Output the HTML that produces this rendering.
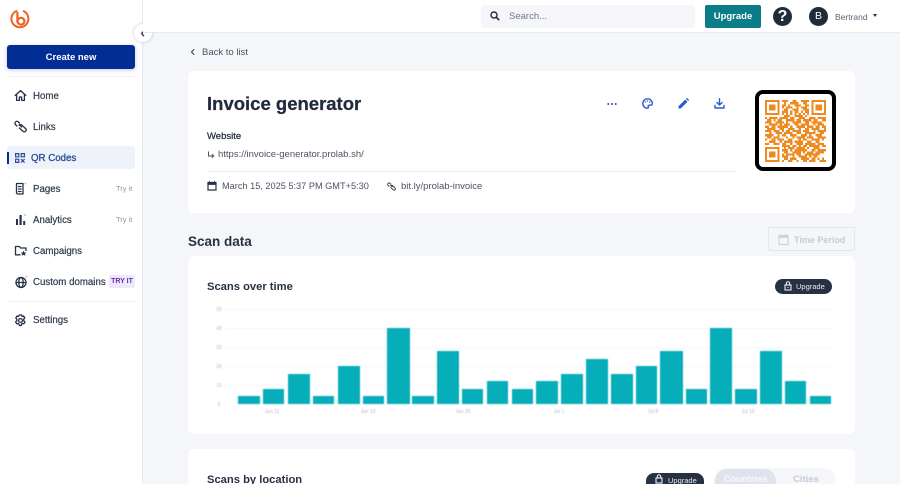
<!DOCTYPE html>
<html lang="en">
<head>
<meta charset="utf-8">
<title>Invoice generator</title>
<style>
html,body{margin:0;padding:0;width:900px;height:484px;overflow:hidden}
body{position:relative;background:#f4f6fa;font-family:"Liberation Sans",sans-serif;color:#273144}
.a{position:absolute;white-space:nowrap}
.card{position:absolute;left:188px;width:667px;background:#fff;border-radius:6px}
svg{position:absolute;overflow:visible}
.ic{fill:none;stroke:#273144;stroke-width:1.3;stroke-linecap:round;stroke-linejoin:round}
.blue{fill:none;stroke:#2a5bd0;stroke-width:1.4;stroke-linecap:round;stroke-linejoin:round}
.nav{font-size:9.700px;font-weight:400;color:#2f3a4d;line-height:16px;-webkit-text-stroke:.2px #2f3a4d}
.try{font-size:7.500px;color:#8f98a6;line-height:12px}
.pill{position:absolute;background:#273144;border-radius:8px;color:#e8ebf0;font-size:7.500px;line-height:15px}
</style>
</head>
<body>

<!-- Sidebar -->
<div class="a" style="left:0;top:0;width:142px;height:484px;background:#fff;border-right:1px solid #e4e9f2"></div>
<svg style="left:10px;top:9px" width="20" height="20" viewBox="0 0 20 20"><path d="M6.400 2A8.500 8.500 0 1 0 13.800 2.200" fill="none" stroke="#ee6123" stroke-width="2" stroke-linecap="round"/><path d="M7.400 3.800V12.800" fill="none" stroke="#ee6123" stroke-width="2.200" stroke-linecap="round"/><circle cx="11" cy="12.200" r="3.400" fill="none" stroke="#ee6123" stroke-width="2.200"/></svg>

<div class="a" style="left:134px;top:24px;width:18px;height:18px;border-radius:50%;background:#fff;box-shadow:0 0 3px rgba(60,80,120,.35)"></div>
<svg style="left:140px;top:30px" width="6" height="7" viewBox="0 0 6 7"><path d="M4 .8 1.600 3.500 4 6.200" fill="none" stroke="#273144" stroke-width="1.300"/></svg>

<div class="a" style="left:7px;top:45px;width:128px;height:24px;background:#022d94;border-radius:3px;box-shadow:0 1px 4px rgba(2,45,148,.25);color:#fff;font-size:9.500px;font-weight:700;line-height:25px;text-align:center">Create new</div>
<div class="a" style="left:7px;top:76px;width:128px;height:1px;background:#edf0f6"></div>

<svg style="left:14px;top:89px" width="13" height="13" viewBox="0 0 13 13"><path class="ic" d="M1.200 6.400 6.500 1.600l5.300 4.800M2.600 5.400v6h2.800V8h2.200v3.400h2.800v-6"/></svg>
<div class="a nav" style="left:33px;top:89px">Home</div>

<svg style="left:14px;top:120px" width="13" height="13" viewBox="0 0 13 13"><path class="ic" d="M5.500 3 4 1.600a2 2 0 0 0-2.700 2.800L3 6.200M7.600 7 5.200 4.600M5.400 8l4 3.600a1.900 1.900 0 0 0 2.500-2.700L8 5.200a2 2 0 0 0-2.600.2"/></svg>
<div class="a nav" style="left:33px;top:120px">Links</div>

<div class="a" style="left:7px;top:146px;width:128px;height:23px;background:#eef3fb;border-radius:3px"></div>
<div class="a" style="left:7px;top:152px;width:2px;height:12px;background:#022d94"></div>
<svg style="left:15px;top:153px" width="10" height="10" viewBox="0 0 10 10"><path fill="none" stroke="#2c4a94" stroke-width="1.200" d="M.6.6h3.200v3.200H.6zM6.200.6h3.200v3.200H6.200zM.6 6.200h3.200v3.200H.6z"/><path fill="none" stroke="#2c4a94" stroke-width="1.200" d="M6 6l3.600 3.600M9.600 6 6 9.600"/></svg>
<div class="a nav" style="left:31px;top:151px;color:#2c4a94;-webkit-text-stroke:.3px #2c4a94">QR Codes</div>

<svg style="left:15px;top:182px" width="13" height="13" viewBox="0 0 13 13"><path class="ic" d="M1.500 1.500h6.500v10.500H3a1.500 1.500 0 0 1-1.500-1.500z"/><path class="ic" d="M3.500 4.500h2.500M3.500 7h2.500M3.500 9.500h2.500"/><circle cx="10.500" cy="1.500" r="1" fill="#c0c6d0"/></svg>
<div class="a nav" style="left:33px;top:182px">Pages</div>
<div class="a try" style="left:116px;top:183px">Try it</div>

<svg style="left:15px;top:213px" width="13" height="13" viewBox="0 0 13 13"><path fill="#273144" d="M1 6h2v6H1zM4.500 2h2.200v10H4.500zM8.200 8h2v4h-2z"/><circle cx="10" cy="2" r="1" fill="#c0c6d0"/></svg>
<div class="a nav" style="left:33px;top:213px">Analytics</div>
<div class="a try" style="left:116px;top:214px">Try it</div>

<svg style="left:14px;top:244px" width="14" height="13" viewBox="0 0 14 13"><path class="ic" d="M6 10.800H1.500V2.500h4l1 1.500h5.500v2.500"/><path fill="#273144" d="M9.500 6.800l1 1.700 1.800.2-1.300 1.200.4 1.800-1.900-1-1.800 1 .4-1.800-1.300-1.200 1.800-.2z"/></svg>
<div class="a nav" style="left:33px;top:244px">Campaigns</div>

<svg style="left:15px;top:275px" width="14" height="14" viewBox="0 0 14 14"><circle class="ic" cx="6" cy="7.500" r="5"/><ellipse class="ic" cx="6" cy="7.500" rx="2.200" ry="5"/><path class="ic" d="M1 7.500h10"/><circle cx="11.500" cy="1.500" r="1" fill="#c0c6d0"/></svg>
<div class="a nav" style="left:33px;top:275px">Custom domains</div>
<div class="a" style="left:109px;top:275px;width:26px;height:13px;border-radius:2px;background:linear-gradient(90deg,#f1e4fb,#e6eefb);color:#6d2bb0;font-size:7px;font-weight:700;line-height:13px;text-align:center">TRY IT</div>

<div class="a" style="left:7px;top:301px;width:128px;height:1px;background:#edf0f6"></div>

<svg style="left:14px;top:314px" width="13" height="13" viewBox="0 0 13 13"><circle class="ic" cx="6.500" cy="6.500" r="1.900"/><path class="ic" d="M5.300 1h2.400l.4 1.500 1.500-.5 1.200 2-1.100 1.100.1 1.800 1.200 1-1.200 2-1.500-.5-.6.5-.4 1.600H5.300l-.4-1.600-.6-.5-1.500.5-1.200-2 1.200-1 .1-1.800L1.800 4l1.200-2 1.500.5z"/></svg>
<div class="a nav" style="left:33px;top:313px">Settings</div>

<!-- Top bar -->
<div class="a" style="left:143px;top:0;width:757px;height:32px;background:#fff;border-bottom:1px solid #e6ebf3"></div>
<div class="a" style="left:481px;top:5px;width:214px;height:23px;background:#f4f6fa;border-radius:3px"></div>
<svg style="left:490px;top:11px" width="10" height="10" viewBox="0 0 10 10"><circle cx="4" cy="4" r="3" fill="none" stroke="#222b3a" stroke-width="1.400"/><path d="M6.300 6.300 9.200 9.200" stroke="#222b3a" stroke-width="1.600"/></svg>
<div class="a" style="left:509px;top:9px;font-size:9.500px;line-height:15px;color:#6f7785">Search...</div>
<div class="a" style="left:705px;top:5px;width:56px;height:23px;background:#0a7d88;border-radius:2px;color:#fff;font-size:9.500px;font-weight:700;line-height:24px;text-align:center">Upgrade</div>
<div class="a" style="left:773px;top:7px;width:19px;height:19px;border-radius:50%;background:#222b3a;color:#fff;font-size:16px;font-weight:700;line-height:20px;text-align:center">?</div>
<div class="a" style="left:809px;top:7px;width:19px;height:19px;border-radius:50%;background:#222b3a;color:#fff;font-size:10.500px;line-height:19px;text-align:center">B</div>
<div class="a" style="left:835px;top:10px;font-size:8.500px;line-height:14px;color:#5d6573">Bertrand</div>
<div class="a" style="left:873px;top:14px;width:0;height:0;border-left:2.500px solid transparent;border-right:2.500px solid transparent;border-top:3px solid #273144"></div>

<!-- Back link -->
<svg style="left:190px;top:48px" width="6" height="8" viewBox="0 0 6 8"><path d="M4.200 1.200 1.500 4l2.700 2.800" fill="none" stroke="#3a4455" stroke-width="1.100"/></svg>
<div class="a" style="left:202px;top:45px;font-size:9.500px;line-height:15px;color:#4a5363">Back to list</div>

<!-- Card 1 -->
<div class="card" style="top:71px;height:142px"></div>
<div class="a" style="left:207px;top:91px;font-size:18.500px;font-weight:700;line-height:26px;color:#202b3c;-webkit-text-stroke:.25px #202b3c">Invoice generator</div>

<svg style="left:607px;top:102px" width="10" height="4" viewBox="0 0 10 4"><circle cx="1.300" cy="2" r="1" fill="#2c4a94"/><circle cx="5" cy="2" r="1" fill="#2c4a94"/><circle cx="8.700" cy="2" r="1" fill="#2c4a94"/></svg>
<svg style="left:642px;top:98px" width="11" height="11" viewBox="0 0 11 11"><path class="blue" d="M5.500.8a4.700 4.700 0 1 0 0 9.400c1 0 1.200-.8.800-1.400-.5-.8 0-1.600 1-1.600h1.400c1 0 1.600-.6 1.600-1.700C10.300 2.700 8.200.8 5.500.8z"/><circle cx="3.300" cy="4" r=".7" fill="#2a5bd0"/><circle cx="5.500" cy="3" r=".7" fill="#2a5bd0"/><circle cx="7.800" cy="4" r=".7" fill="#2a5bd0"/></svg>
<svg style="left:678px;top:98px" width="11" height="11" viewBox="0 0 11 11"><path fill="#2a5bd0" d="M.5 8.300 7.300 1.500l2.200 2.200-6.800 6.800H.5zM8 .8l.7-.5c.3-.2.6-.2.800 0l1.200 1.200c.2.200.2.500 0 .8l-.5.700z"/></svg>
<svg style="left:714px;top:98px" width="11" height="11" viewBox="0 0 11 11"><path class="blue" d="M5.500.8v6M3 4.500l2.500 2.500L8 4.500"/><path class="blue" d="M1 7.500v2.500h9V7.500"/></svg>

<div class="a" style="left:207px;top:129px;font-size:9.500px;line-height:15px;color:#273144;-webkit-text-stroke:.25px #273144">Website</div>
<svg style="left:207px;top:151px" width="8" height="8" viewBox="0 0 8 8"><path d="M1.500.5v4.500h5M4.800 3.200 6.700 5 4.800 6.800" fill="none" stroke="#4a5363" stroke-width="1"/></svg>
<div class="a" style="left:218px;top:147px;font-size:9.500px;line-height:15px;color:#4a5363">https://invoice-generator.prolab.sh/</div>
<div class="a" style="left:207px;top:171px;width:529px;height:1px;background:#e9ecf1"></div>

<svg style="left:207px;top:180px" width="10" height="11" viewBox="0 0 10 11"><path d="M1 2.500h8v7.500H1z" fill="none" stroke="#273144" stroke-width="1.200"/><path d="M1 2.500h8v2H1zM2.500.8v1.700M7.500.8v1.700" fill="#273144" stroke="#273144" stroke-width=".8"/></svg>
<div class="a" style="left:222px;top:179px;font-size:9.200px;line-height:15px;color:#4a5363">March 15, 2025 5:37 PM GMT+5:30</div>
<svg style="left:387px;top:182px" width="9" height="9" viewBox="0 0 13 13"><path class="ic" d="M5.500 3 4 1.600a2 2 0 0 0-2.700 2.800L3 6.200M7.600 7 5.200 4.600M5.400 8l4 3.600a1.900 1.900 0 0 0 2.500-2.700L8 5.200a2 2 0 0 0-2.600.2"/></svg>
<div class="a" style="left:401px;top:179px;font-size:9.500px;line-height:15px;color:#4a5363">bit.ly/prolab-invoice</div>

<!-- QR -->
<div class="a" style="left:755px;top:90px;width:73px;height:73px;border:4px solid #000;border-radius:8px;background:#fff"></div>
<svg style="left:765px;top:100px" width="61" height="62" viewBox="0 0 29 29" preserveAspectRatio="none" shape-rendering="crispEdges">
<path fill="#ee8a1f" fill-rule="evenodd" d="M0 0h7v7H0zM1 1v5h5V1zM2 2h3v3H2zM22 0h7v7h-7zM23 1v5h5V1zM24 2h3v3h-3zM0 22h7v7H0zM1 23v5h5v-5zM2 24h3v3H2z"/>
<path fill="none" stroke="#ee8a1f" stroke-width="1" d="M8 .5h3M13 .5h2M17 .5h4M9 1.500h1M12 1.500h4M18 1.500h2M8 2.500h2M11 2.500h1M14 2.500h3M19 2.500h2M8 3.500h1M10 3.500h3M15 3.500h1M17 3.500h3M9 4.500h2M13 4.500h3M18 4.500h3M8 5.500h3M12 5.500h1M14 5.500h2M17 5.500h1M19 5.500h2M8 6.500h1M10 6.500h1M12 6.500h1M14 6.500h1M16 6.500h1M18 6.500h1M20 6.500h1M9 7.500h3M14 7.500h4M19 7.500h1M0 8.500h1M2 8.500h4M7 8.500h4M12 8.500h2M16 8.500h3M21 8.500h3M25 8.500h4M1 9.500h2M4 9.500h1M6 9.500h2M10 9.500h4M15 9.500h2M18 9.500h4M23 9.500h2M27 9.500h2M0 10.500h3M5 10.500h4M10 10.500h1M13 10.500h4M19 10.500h2M22 10.500h5M2 11.500h4M7 11.500h1M9 11.500h3M14 11.500h2M17 11.500h4M23 11.500h1M25 11.500h3M0 12.500h2M3 12.500h2M6 12.500h5M12 12.500h1M15 12.500h4M20 12.500h3M24 12.500h2M27 12.500h2M1 13.500h4M7 13.500h2M11 13.500h3M16 13.500h1M19 13.500h2M22 13.500h4M28 13.500h1M0 14.500h3M4 14.500h3M8 14.500h1M10 14.500h2M13 14.500h4M18 14.500h3M23 14.500h1M25 14.500h4M2 15.500h1M5 15.500h3M9 15.500h4M15 15.500h2M19 15.500h5M26 15.500h2M0 16.500h4M6 16.500h1M8 16.500h2M12 16.500h3M17 16.500h3M21 16.500h1M24 16.500h3M1 17.500h2M4 17.500h3M10 17.500h1M13 17.500h1M15 17.500h4M20 17.500h3M25 17.500h4M0 18.500h1M3 18.500h2M6 18.500h3M11 18.500h2M16 18.500h1M18 18.500h2M22 18.500h4M27 18.500h1M2 19.500h3M7 19.500h1M9 19.500h4M14 19.500h4M20 19.500h2M24 19.500h2M0 20.500h2M4 20.500h3M8 20.500h2M12 20.500h1M15 20.500h3M19 20.500h5M25 20.500h3M8 21.500h4M13 21.500h2M16 21.500h1M18 21.500h2M21 21.500h5M27 21.500h2M9 22.500h1M11 22.500h3M15 22.500h4M20 22.500h1M23 22.500h3M8 23.500h3M12 23.500h1M14 23.500h6M22 23.500h2M25 23.500h4M9 24.500h2M13 24.500h4M18 24.500h1M20 24.500h3M24 24.500h4M8 25.500h1M10 25.500h4M15 25.500h2M19 25.500h7M8 26.500h3M13 26.500h1M16 26.500h4M21 26.500h1M23 26.500h2M9 27.500h2M12 27.500h3M17 27.500h4M22 27.500h2M25 27.500h1M27 27.500h1M8 28.500h1M11 28.500h2M15 28.500h1M18 28.500h2M21 28.500h3M26 28.500h3"/>
</svg>

<!-- Scan data -->
<div class="a" style="left:188px;top:232px;font-size:13.500px;font-weight:700;line-height:19px;color:#273144">Scan data</div>
<div class="a" style="left:768px;top:227px;width:85px;height:22px;border:1px solid #e2e6ed;border-radius:2px;color:#c6cbd4;font-size:9px;font-weight:700;line-height:24px;text-indent:25px">Time Period</div>
<svg style="left:778px;top:233px" width="11" height="12" viewBox="0 0 11 12"><path d="M1 2.500h9v9H1z" fill="none" stroke="#cdd2da" stroke-width="1.200"/><path d="M1 2.500h9v2H1zM3 .5v2M8 .5v2" fill="#cdd2da" stroke="#cdd2da" stroke-width=".8"/></svg>

<!-- Card 2 -->
<div class="card" style="top:256px;height:178px"></div>
<div class="a" style="left:207px;top:279px;font-size:11.200px;font-weight:700;line-height:16px;color:#273144">Scans over time</div>
<div class="pill" style="left:775px;top:279px;width:57px;text-indent:21px">Upgrade</div>
<svg style="left:784px;top:281px" width="8" height="10" viewBox="0 0 8 10"><path d="M1 4h6v5H1zM2.300 4V2.500a1.700 1.700 0 0 1 3.400 0V4" fill="none" stroke="#fff" stroke-width="1"/><rect x="3.500" y="6" width="1" height="1" fill="#fff"/></svg>

<!-- Chart -->
<svg style="left:200px;top:300px;filter:blur(.6px)" width="640" height="120" viewBox="0 0 640 120">
<g stroke="#f3f5f7" stroke-width="1"><path d="M26 9.500H634M26 28.500H634M26 47.500H634M26 66.500H634M26 85.500H634"/></g>
<g fill="#b4bac3" font-family="Liberation Sans, sans-serif" font-size="5" text-anchor="middle">
<text x="19" y="11">50</text><text x="19" y="30">40</text><text x="19" y="49">30</text><text x="19" y="68">20</text><text x="19" y="87">10</text><text x="19" y="106">0</text>
<text x="72" y="113">Jun 11</text><text x="168" y="113">Jun 18</text><text x="263" y="113">Jun 25</text><text x="359" y="113">Jul 1</text><text x="453" y="113">Jul 8</text><text x="548" y="113">Jul 15</text>
</g>
<g fill="#06aeba">
<rect x="38" y="96" width="22" height="8"/>
<rect x="63" y="89" width="21" height="15"/>
<rect x="88" y="74" width="22" height="30"/>
<rect x="113" y="96" width="21" height="8"/>
<rect x="138" y="66" width="22" height="38"/>
<rect x="163" y="96" width="21" height="8"/>
<rect x="187" y="28" width="23" height="76"/>
<rect x="212" y="96" width="22" height="8"/>
<rect x="237" y="51" width="22" height="53"/>
<rect x="262" y="89" width="21" height="15"/>
<rect x="287" y="81" width="21" height="23"/>
<rect x="312" y="89" width="21" height="15"/>
<rect x="336" y="81" width="22" height="23"/>
<rect x="361" y="74" width="22" height="30"/>
<rect x="386" y="59" width="22" height="45"/>
<rect x="411" y="74" width="22" height="30"/>
<rect x="436" y="66" width="21" height="38"/>
<rect x="460" y="51" width="23" height="53"/>
<rect x="486" y="89" width="21" height="15"/>
<rect x="510" y="28" width="22" height="76"/>
<rect x="535" y="89" width="22" height="15"/>
<rect x="560" y="51" width="22" height="53"/>
<rect x="585" y="81" width="21" height="23"/>
<rect x="610" y="96" width="21" height="8"/>
</g>
</svg>

<!-- Card 3 -->
<div class="card" style="top:449px;height:35px;border-radius:6px 6px 0 0"></div>
<div class="a" style="left:207px;top:472px;font-size:11.200px;font-weight:700;line-height:16px;color:#273144">Scans by location</div>
<div class="pill" style="left:646px;top:473px;width:58px;height:11px;border-radius:8px 8px 0 0;overflow:hidden;text-indent:22px">Upgrade</div>
<svg style="left:655px;top:474px" width="8" height="10" viewBox="0 0 8 10"><path d="M1 4h6v5H1zM2.300 4V2.500a1.700 1.700 0 0 1 3.400 0V4" fill="none" stroke="#fff" stroke-width="1"/></svg>
<div class="a" style="left:714px;top:468px;width:122px;height:16px;background:#f5f7fa;border-radius:12px 12px 0 0"></div>
<div class="a" style="left:715px;top:469px;width:61px;height:15px;background:#dfe4ec;border-radius:12px 12px 0 0;color:#f7f8fa;font-size:9.500px;font-weight:700;line-height:21px;text-align:center;overflow:hidden">Countries</div>
<div class="a" style="left:776px;top:469px;width:60px;height:15px;overflow:hidden;color:#c6cbd4;font-size:9.500px;font-weight:700;line-height:21px;text-align:center">Cities</div>

</body>
</html>
